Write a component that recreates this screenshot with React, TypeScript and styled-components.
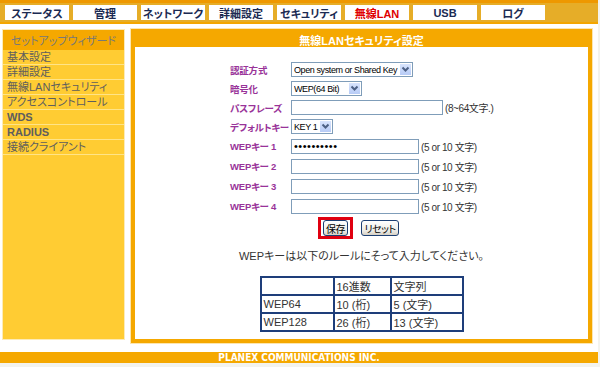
import React from 'react'
import styled, { createGlobalStyle } from 'styled-components'

const GlobalStyle = createGlobalStyle`
  body {
    margin: 0;
    background: #f3f3ee;
    font-family: "Liberation Sans", "Noto Sans CJK JP", sans-serif;
    font-feature-settings: "palt";
  }
`

const Page = styled.div`
  width: 598px;
  background: #fff;
`

const TopBar = styled.div`
  display: flex;
  gap: 4px;
  height: 24px;
  box-sizing: border-box;
  padding: 5px 0 0 5px;
  background: linear-gradient(#ee9800 0 3px, #e6ad28 3px 22px, #f3a600 22px 24px);
`

const Tab = styled.div<{ $active?: boolean }>`
  width: 64px;
  height: 15px;
  background: #fff;
  display: flex;
  align-items: center;
  justify-content: center;
  font-size: 11px;
  font-weight: bold;
  color: ${p => (p.$active ? '#e00000' : '#1b2a52')};
`

const Body = styled.div`
  display: flex;
  gap: 6px;
  padding: 5px 6px 9px 2px;
`

const Sidebar = styled.div`
  width: 123px;
  height: 311px;
  box-sizing: border-box;
  border: 1px solid #fcebb8;
  background: #ffcc33;
  display: flex;
  flex-direction: column;
`

const SideHead = styled.div`
  height: 20px;
  background: #f5a800;
  color: #787878;
  font-size: 11px;
  display: flex;
  align-items: center;
  justify-content: center;
`

const SideItem = styled.div<{ $bold?: boolean }>`
  height: 14px;
  border-bottom: 1px solid #ffe488;
  padding-left: 4px;
  font-size: 11px;
  line-height: 14px;
  color: #5e5e5e;
  font-weight: ${p => (p.$bold ? 'bold' : 'normal')};
  white-space: nowrap;
`

const Panel = styled.div`
  width: 461px;
  height: 314px;
  box-sizing: border-box;
  border: 4px solid #f5a800;
  box-shadow: 0 0 0 1px #fce6b0;
  display: flex;
  flex-direction: column;
`

const PanelTitle = styled.div`
  height: 14px;
  background: #f5a800;
  color: #fff;
  font-size: 11px;
  font-weight: bold;
  display: flex;
  align-items: center;
  justify-content: center;
`

const PanelBody = styled.div`
  flex: 1;
  padding-top: 13px;
`

const Form = styled.div`
  display: grid;
  grid-template-columns: 61px auto;
  grid-template-rows: repeat(4, 19px) repeat(4, 20px);
  padding-left: 95px;
  align-items: center;
`

const Label = styled.div`
  font-size: 9.5px;
  font-weight: bold;
  letter-spacing: -0.2px;
  color: #993399;
  white-space: nowrap;
`

const Field = styled.div`
  display: flex;
  align-items: center;
`

const SelectBox = styled.div<{ $w: number }>`
  display: flex;
  align-items: center;
  width: ${p => p.$w}px;
  height: 15px;
  box-sizing: border-box;
  border: 1px solid #7f9db9;
  background: #fff;
  padding-left: 2px;
  font-size: 9px;
  letter-spacing: -0.4px;
  color: #000;
  white-space: nowrap;
`

const SelectText = styled.span`
  flex: 1;
  overflow: hidden;
`

const Arrow = styled.span`
  flex-shrink: 0;
  width: 13px;
  height: 13px;
  box-sizing: border-box;
  border: 1px solid #fff;
  background: linear-gradient(#d8e4fd, #b7cbf6);
  display: flex;
  align-items: center;
  justify-content: center;
`

const TextBox = styled.input<{ $w: number }>`
  width: ${p => p.$w}px;
  height: 15px;
  box-sizing: border-box;
  border: 1px solid #7f9db9;
  padding: 0 2px;
  margin: 0;
  font-size: 11px;
  font-family: "Liberation Sans", sans-serif;
  letter-spacing: 0.5px;
  outline: none;
`

const Hint = styled.span`
  margin-left: 2px;
  font-size: 10px;
  letter-spacing: -0.4px;
  color: #333;
  white-space: nowrap;
`

const Buttons = styled.div`
  display: flex;
  justify-content: center;
  align-items: center;
  gap: 8px;
  padding-right: 6px;
  margin-top: 1px;
`

const Highlight = styled.div`
  border: 3px solid #e00010;
  padding: 0 2px;
  height: 16px;
  display: flex;
  align-items: center;
`

const Button = styled.button<{ $w: number }>`
  width: ${p => p.$w}px;
  height: 16px;
  margin: 0;
  padding: 0;
  border: 1px solid #1c3f73;
  border-radius: 3px;
  background: linear-gradient(#ffffff, #ecebe6 70%, #d6d0c5);
  font-size: 10px;
  letter-spacing: -0.5px;
  white-space: nowrap;
  font-family: "Liberation Sans", "Noto Sans CJK JP", sans-serif;
  font-feature-settings: "palt";
  color: #000;
`

const Notice = styled.div`
  margin-top: 10px;
  text-align: center;
  font-size: 11px;
  line-height: 14px;
  color: #333;
`

const RuleTable = styled.table`
  margin: 13px auto 0;
  border: 1px solid #1e3e7a;
  border-spacing: 0;
  font-size: 11px;
  color: #333;
`

const Cell = styled.td<{ $w?: number; $h: number }>`
  border: 1px solid #1e3e7a;
  width: ${p => (p.$w ? `${p.$w - 4}px` : 'auto')};
  height: ${p => p.$h - 2}px;
  padding: 0 0 0 2px;
  white-space: nowrap;
`

const Footer = styled.div`
  height: 11px;
  background: #f5a800;
  color: #fff;
  font-size: 10px;
  font-family: "Liberation Sans Narrow", "DejaVu Sans Condensed", "Liberation Sans", sans-serif;
  font-weight: bold;
  display: flex;
  align-items: center;
  justify-content: center;
`

const tabs = ['ステータス', '管理', 'ネットワーク', '詳細設定', 'セキュリティ', '無線LAN', 'USB', 'ログ']

const menu = [
  { t: '基本設定' },
  { t: '詳細設定' },
  { t: '無線LANセキュリティ' },
  { t: 'アクセスコントロール' },
  { t: 'WDS', b: true },
  { t: 'RADIUS', b: true },
  { t: '接続クライアント' },
]

function Select({ w, value }: { w: number; value: string }) {
  return (
    <SelectBox $w={w}>
      <SelectText>{value}</SelectText>
      <Arrow>
        <svg width="9" height="7" viewBox="0 0 9 7">
          <polyline points="1.5,1.5 4.5,4.5 7.5,1.5" fill="none" stroke="#4d6185" strokeWidth="2" />
        </svg>
      </Arrow>
    </SelectBox>
  )
}

export default function App() {
  return (
    <Page>
      <GlobalStyle />
      <TopBar>
        {tabs.map(t => (
          <Tab key={t} $active={t === '無線LAN'}>{t}</Tab>
        ))}
      </TopBar>

      <Body>
        <Sidebar>
          <SideHead>セットアップウィザード</SideHead>
          {menu.map(m => (
            <SideItem key={m.t} $bold={m.b}>{m.t}</SideItem>
          ))}
        </Sidebar>

        <Panel>
          <PanelTitle>無線LANセキュリティ設定</PanelTitle>
          <PanelBody>
            <Form>
              <Label>認証方式</Label>
              <Field><Select w={122} value="Open system or Shared Key" /></Field>

              <Label>暗号化</Label>
              <Field><Select w={71} value="WEP(64 Bit)" /></Field>

              <Label>パスフレーズ</Label>
              <Field>
                <TextBox $w={152} />
                <Hint>(8~64文字.)</Hint>
              </Field>

              <Label>デフォルトキー</Label>
              <Field><Select w={42} value="KEY 1" /></Field>

              {[1, 2, 3, 4].map(n => (
                <React.Fragment key={n}>
                  <Label>WEPキー {n}</Label>
                  <Field>
                    <TextBox
                      $w={128}
                      type={n === 1 ? 'password' : 'text'}
                      defaultValue={n === 1 ? 'aaaaaaaaaa' : ''}
                    />
                    <Hint>(5 or 10 文字)</Hint>
                  </Field>
                </React.Fragment>
              ))}
            </Form>

            <Buttons>
              <Highlight><Button $w={25}>保存</Button></Highlight>
              <Button $w={38}>リセット</Button>
            </Buttons>

            <Notice>WEPキーは以下のルールにそって入力してください。</Notice>

            <RuleTable>
              <tbody>
                <tr>
                  <Cell $w={73} $h={17}></Cell>
                  <Cell $w={57} $h={17}>16進数</Cell>
                  <Cell $w={72} $h={17}>文字列</Cell>
                </tr>
                <tr>
                  <Cell $h={16}>WEP64</Cell>
                  <Cell $h={16}>10 (桁)</Cell>
                  <Cell $h={16}>5 (文字)</Cell>
                </tr>
                <tr>
                  <Cell $h={16}>WEP128</Cell>
                  <Cell $h={16}>26 (桁)</Cell>
                  <Cell $h={16}>13 (文字)</Cell>
                </tr>
              </tbody>
            </RuleTable>
          </PanelBody>
        </Panel>
      </Body>

      <Footer>PLANEX COMMUNICATIONS INC.</Footer>
    </Page>
  )
}
